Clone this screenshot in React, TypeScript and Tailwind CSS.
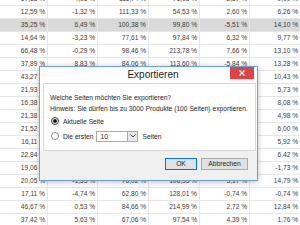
import React from "react";

const rows: string[][] = [
  ["17,83 %", "4,05 %", "111,74 %", "71,08 %", "2,37 %", "9,09 %"],
  ["12,59 %", "-1,32 %", "111,33 %", "54,53 %", "2,60 %", "6,26 %"],
  ["35,25 %", "6,49 %", "100,38 %", "99,80 %", "-5,51 %", "14,10 %"],
  ["14,64 %", "-3,23 %", "77,61 %", "97,84 %", "6,32 %", "9,77 %"],
  ["66,48 %", "-0,29 %", "98,46 %", "213,78 %", "7,66 %", "13,10 %"],
  ["37,89 %", "8,83 %", "84,06 %", "113,60 %", "-5,84 %", "13,28 %"],
  ["43,27 %", "3,12 %", "91,20 %", "102,45 %", "1,84 %", "10,43 %"],
  ["21,93 %", "2,08 %", "73,51 %", "88,12 %", "0,96 %", "5,73 %"],
  ["16,38 %", "-0,84 %", "69,74 %", "95,30 %", "2,15 %", "8,08 %"],
  ["21,38 %", "1,47 %", "81,09 %", "120,66 %", "-1,02 %", "4,98 %"],
  ["21,52 %", "4,21 %", "88,90 %", "99,14 %", "3,45 %", "6,00 %"],
  ["16,11 %", "-2,63 %", "70,27 %", "87,73 %", "1,29 %", "5,92 %"],
  ["22,84 %", "0,77 %", "79,58 %", "110,42 %", "2,88 %", "6,42 %"],
  ["19,06 %", "-3,15 %", "74,19 %", "93,67 %", "-0,51 %", "-1,73 %"],
  ["20,05 %", "-1,53 %", "76,02 %", "106,33 %", "3,17 %", "14,79 %"],
  ["17,11 %", "-4,74 %", "62,80 %", "128,01 %", "-0,74 %", "-0,74 %"],
  ["46,67 %", "0,53 %", "84,66 %", "214,99 %", "2,72 %", "12,84 %"],
  ["37,42 %", "5,63 %", "67,06 %", "97,54 %", "4,39 %", "1,76 %"],
];

function Radio({ checked }: { checked: boolean }) {
  return (
    <span
      className={
        "flex h-[8px] w-[8px] shrink-0 items-center justify-center rounded-full border bg-white " +
        (checked ? "border-[#333333]" : "border-[#8a8a8a]")
      }
    >
      {checked && <span className="h-[4px] w-[4px] rounded-full bg-[#1a1a1a]" />}
    </span>
  );
}

export default function App() {
  return (
    <div
      className="relative h-[225px] w-[300px] overflow-hidden bg-white"
      style={{ fontFamily: '"Liberation Sans", Arial, sans-serif' }}
    >
      <div className="-mt-[7px] flex flex-col">
        {rows.map((r, i) => (
          <div
            key={i}
            className={
              "grid h-[13px] grid-cols-[48px_50px_51px_51px_50px_50px] border-b border-[#e6e6e6] " +
              (i === 2 ? "bg-[#d9d9d9]" : "bg-white")
            }
          >
            {r.map((c, j) => (
              <div
                key={j}
                className={
                  "flex items-center justify-end whitespace-nowrap pr-[2px] text-[6.6px] leading-[12px] text-[#3c3c3c] " +
                  (j < 5 ? "border-r border-[#e6e6e6]" : "")
                }
              >
                {c}
              </div>
            ))}
          </div>
        ))}
      </div>

      {/* Dialog */}
      <div className="absolute left-[39px] top-[66px] flex h-[115px] w-[219px] flex-col border border-[#6e9fd6] bg-white shadow-[0_1px_6px_rgba(0,0,0,0.25)]">
        <div className="relative flex h-[16px] items-center justify-center pl-[9px]">
          <span className="text-[10px] leading-[12px] text-[#1e1e1e]">Exportieren</span>
          <div className="absolute right-[3px] top-0 flex h-[12px] w-[24px] items-center justify-center bg-[#e04343]">
            <svg width="6" height="6" viewBox="0 0 6 6">
              <path d="M0.5 0.5 L5.5 5.5 M5.5 0.5 L0.5 5.5" stroke="white" strokeWidth="1.3" />
            </svg>
          </div>
        </div>
        <div className="ml-[3px] mr-[1px] flex flex-col whitespace-nowrap border border-[#d9d9d9] bg-white pb-[7px] pl-[6px] pt-[8px] text-[6.7px] text-[#1e1e1e]">
          <div className="h-[11px] leading-[11px]">Welche Seiten möchten Sie exportieren?</div>
          <div className="h-[11px] leading-[11px]">
            Hinweis: Sie dürfen bis zu 3000 Produkte (100 Seiten) exportieren.
          </div>
          <div className="flex h-[14px] items-center gap-[4px] pl-[1px]">
            <Radio checked />
            <span className="leading-[11px]">Aktuelle Seite</span>
          </div>
          <div className="mt-[1px] flex h-[14px] items-center pl-[1px]">
            <Radio checked={false} />
            <span className="ml-[4px] leading-[11px]">Die ersten</span>
            <div className="ml-[3px] flex h-[11px] w-[42px] items-center border border-[#ababab] bg-white">
              <span className="flex-1 pl-[3px] leading-[9px]">10</span>
              <div className="flex h-full w-[10px] items-center justify-center border-l border-[#ababab] bg-[#e8e8e8]">
                <svg width="6" height="4" viewBox="0 0 6 4">
                  <path d="M0.5 0.5 L3 3 L5.5 0.5" stroke="#444" strokeWidth="1" fill="none" />
                </svg>
              </div>
            </div>
            <span className="ml-[4px] leading-[11px]">Seiten</span>
          </div>
        </div>
        <div className="flex flex-1 justify-end gap-[4px] bg-[#f0f0f0] pr-[9px] pt-[7px] text-[6.7px] text-[#1e1e1e]">
          <div className="flex h-[12px] w-[32px] items-center justify-center border border-[#0078d7] bg-[#e1e1e1] leading-[10px]">
            OK
          </div>
          <div className="flex h-[12px] w-[47px] items-center justify-center border border-[#adadad] bg-[#e1e1e1] leading-[10px]">
            Abbrechen
          </div>
        </div>
      </div>
    </div>
  );
}
